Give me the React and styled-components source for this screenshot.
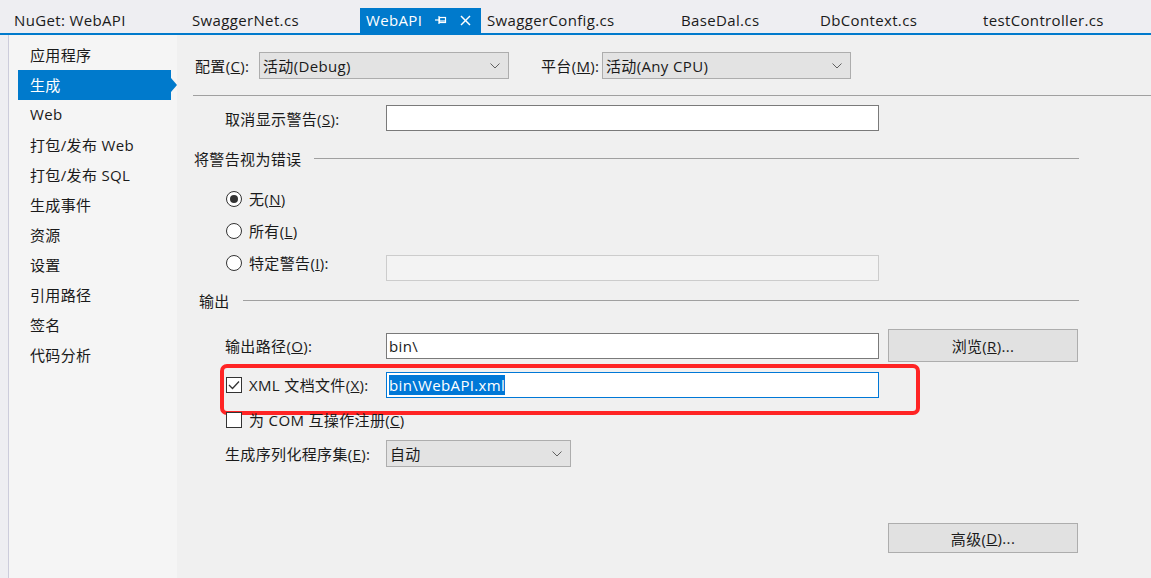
import React from 'react';
import styled, { createGlobalStyle } from 'styled-components';

const GlobalStyle = createGlobalStyle`
  html, body {
    margin: 0;
    padding: 0;
  }
  body {
    background: #eeeef2;
    font-family: "Open Sans", "Noto Sans CJK SC", sans-serif;
    font-size: 15px;
    letter-spacing: 0.35px;
    color: #1a1a1a;
  }
`;

const tabs = [
  { name: 'NuGet: WebAPI', width: 178 },
  { name: 'SwaggerNet.cs', width: 174 },
  { name: 'WebAPI', width: 121, active: true },
  { name: 'SwaggerConfig.cs', width: 194 },
  { name: 'BaseDal.cs', width: 139 },
  { name: 'DbContext.cs', width: 163 },
  { name: 'testController.cs', width: 174 },
];

const pages = ['应用程序', '生成', 'Web', '打包/发布 Web', '打包/发布 SQL', '生成事件', '资源', '设置', '引用路径', '签名', '代码分析'];

const Chevron = () => (
  <svg width="10" height="6" viewBox="0 0 10 6">
    <polyline points="0.5,0.5 5,5 9.5,0.5" fill="none" stroke="#606060" strokeWidth="1" />
  </svg>
);

const PinIcon = () => (
  <svg width="12" height="10" viewBox="0 0 12 10">
    <line x1="0" y1="5" x2="4" y2="5" stroke="#fff" strokeWidth="1.2" />
    <line x1="4" y1="1" x2="4" y2="9" stroke="#fff" strokeWidth="1.2" />
    <rect x="4.5" y="2.5" width="6" height="5" fill="none" stroke="#fff" strokeWidth="1.2" />
    <line x1="4.5" y1="6" x2="10.5" y2="6" stroke="#fff" strokeWidth="1.2" />
  </svg>
);

const CloseIcon = () => (
  <svg width="11" height="11" viewBox="0 0 11 11">
    <line x1="1" y1="1" x2="10" y2="10" stroke="#fff" strokeWidth="1.5" />
    <line x1="10" y1="1" x2="1" y2="10" stroke="#fff" strokeWidth="1.5" />
  </svg>
);

const CheckMark = () => (
  <svg width="12" height="10" viewBox="0 0 12 10">
    <polyline points="1,5 4.5,8.5 11,1.5" fill="none" stroke="#333" strokeWidth="1.3" />
  </svg>
);

export default function App() {
  return (
    <Window>
      <GlobalStyle />
      <TabBar>
        {tabs.map(tab => (
          <Tab key={tab.name} $w={tab.width} $active={tab.active}>
            <span>{tab.name}</span>
            {tab.active && (
              <TabIcons>
                <PinIcon />
                <CloseIcon />
              </TabIcons>
            )}
          </Tab>
        ))}
      </TabBar>
      <Body>
        <LeftStrip />
        <Sidebar>
          {pages.map(page => (
            <NavItem key={page} $selected={page === '生成'}>{page}</NavItem>
          ))}
        </Sidebar>
        <Main>
          <ConfigRow>
            <ConfigLabel $w={64}>配置(<u>C</u>):</ConfigLabel>
            <Select $w={250}>
              <span>活动(Debug)</span>
              <Chevron />
            </Select>
            <ConfigLabel $w={61} $gap={32}>平台(<u>M</u>):</ConfigLabel>
            <Select $w={249}>
              <span>活动(Any CPU)</span>
              <Chevron />
            </Select>
          </ConfigRow>
          <Divider />

          <Form>
            <Row $h={26} $mt={9}>
              <FieldLabel>取消显示警告(<u>S</u>):</FieldLabel>
              <TextBox />
            </Row>

            <GroupHeader $mt={19} $indent={1}>
              <span>将警告视为错误</span>
              <GroupLine />
            </GroupHeader>

            <RadioRow $mt={13}>
              <Radio $checked />
              <OptionLabel>无(<u>N</u>)</OptionLabel>
            </RadioRow>
            <RadioRow>
              <Radio />
              <OptionLabel>所有(<u>L</u>)</OptionLabel>
            </RadioRow>
            <RadioRow>
              <Radio />
              <OptionLabel $w={137}>特定警告(<u>I</u>):</OptionLabel>
              <TextBox $disabled $top={8} />
            </RadioRow>

            <GroupHeader $mt={13} $indent={6}>
              <span>输出</span>
              <GroupLine />
            </GroupHeader>

            <Row $h={33} $mt={17}>
              <FieldLabel>输出路径(<u>O</u>):</FieldLabel>
              <TextBox>bin\</TextBox>
              <Button $ml={9} $h={33}>浏览(<u>R</u>)...</Button>
            </Row>

            <Row $h={26} $mt={10}>
              <CheckBox><CheckMark /></CheckBox>
              <OptionLabel $w={137}>XML 文档文件(<u>X</u>):</OptionLabel>
              <TextBox $focused>
                <Selection>bin\WebAPI.xml</Selection>
              </TextBox>
              <Highlight />
            </Row>

            <Row $h={16} $mt={14}>
              <CheckBox />
              <OptionLabel>为 COM 互操作注册(<u>C</u>)</OptionLabel>
            </Row>

            <Row $h={27} $mt={12}>
              <FieldLabel>生成序列化程序集(<u>E</u>):</FieldLabel>
              <Select $w={185}>
                <span>自动</span>
                <Chevron />
              </Select>
            </Row>

            <Row $h={30} $mt={56}>
              <Button $ml={695} $h={30}>高级(<u>D</u>)...</Button>
            </Row>
          </Form>
        </Main>
      </Body>
    </Window>
  );
}

const Window = styled.div`
  width: 1151px;
  height: 578px;
  display: flex;
  flex-direction: column;
  overflow: hidden;
`;

const TabBar = styled.div`
  height: 33px;
  display: flex;
  align-items: flex-end;
  padding-left: 8px;
  background: #eeeef2;
  border-bottom: 2px solid #007acc;
`;

const Tab = styled.div`
  width: ${p => p.$w}px;
  height: 25px;
  flex-shrink: 0;
  box-sizing: border-box;
  padding: 0 0 1px 6px;
  display: flex;
  align-items: center;
  white-space: nowrap;
  background: ${p => (p.$active ? '#007acc' : 'transparent')};
  color: ${p => (p.$active ? '#fff' : '#1a1a1a')};
`;

const TabIcons = styled.span`
  display: flex;
  align-items: center;
  gap: 13px;
  margin-left: 13px;
`;

const Body = styled.div`
  flex: 1;
  display: flex;
`;

const LeftStrip = styled.div`
  width: 8px;
  background: #eeeef2;
  border-right: 1px solid #ccccdb;
`;

const Sidebar = styled.div`
  width: 168px;
  padding-top: 5px;
  background: #f5f5f5;
`;

const NavItem = styled.div`
  position: relative;
  height: 30px;
  width: 153px;
  margin-left: 9px;
  padding: 0 0 2px 12px;
  box-sizing: border-box;
  display: flex;
  align-items: center;
  background: ${p => (p.$selected ? '#007acc' : 'transparent')};
  color: ${p => (p.$selected ? '#fff' : '#1a1a1a')};

  &::after {
    content: '';
    display: ${p => (p.$selected ? 'block' : 'none')};
    position: absolute;
    left: 100%;
    top: 50%;
    margin-top: -7px;
    border-left: 6px solid #007acc;
    border-top: 7px solid transparent;
    border-bottom: 7px solid transparent;
  }
`;

const Main = styled.div`
  flex: 1;
  background: #f0f0f0;
  padding-top: 17px;
  padding-left: 16px;
  display: flex;
  flex-direction: column;
`;

const ConfigRow = styled.div`
  height: 27px;
  padding-left: 2px;
  display: flex;
  align-items: center;
`;

const ConfigLabel = styled.span`
  width: ${p => p.$w}px;
  margin-left: ${p => p.$gap || 0}px;
  flex-shrink: 0;
  white-space: nowrap;
`;

const Select = styled.div`
  width: ${p => p.$w}px;
  height: 27px;
  flex-shrink: 0;
  box-sizing: border-box;
  padding: 0 8px 0 3px;
  display: flex;
  align-items: center;
  justify-content: space-between;
  background: #e3e3e3;
  border: 1px solid #adadad;
`;

const Divider = styled.div`
  height: 1px;
  margin-top: 16px;
  background: #a0a0a0;
`;

const Form = styled.div`
  width: 886px;
  display: flex;
  flex-direction: column;
`;

const Row = styled.div`
  position: relative;
  height: ${p => p.$h}px;
  margin-top: ${p => p.$mt || 0}px;
  display: flex;
  align-items: center;
`;

const FieldLabel = styled.span`
  width: 161px;
  margin-left: 32px;
  flex-shrink: 0;
  white-space: nowrap;
`;

const TextBox = styled.div`
  width: 493px;
  height: 26px;
  flex-shrink: 0;
  box-sizing: border-box;
  padding-left: 2px;
  display: flex;
  align-items: center;
  align-self: ${p => (p.$top ? 'flex-start' : 'center')};
  margin-top: ${p => p.$top || 0}px;
  background: ${p => (p.$disabled ? '#f3f3f3' : '#fff')};
  border: 1px solid ${p => (p.$disabled ? '#cccccc' : p.$focused ? '#0078d7' : '#7a7a7a')};
`;

const Selection = styled.span`
  background: #0078d7;
  color: #fff;
  line-height: 20px;
`;

const Button = styled.div`
  width: 190px;
  height: ${p => p.$h}px;
  margin-left: ${p => p.$ml}px;
  flex-shrink: 0;
  box-sizing: border-box;
  display: flex;
  align-items: center;
  justify-content: center;
  background: #e1e1e1;
  border: 1px solid #adadad;
`;

const GroupHeader = styled.div`
  height: 20px;
  margin-top: ${p => p.$mt}px;
  padding-left: ${p => p.$indent}px;
  display: flex;
  align-items: center;
  white-space: nowrap;

  > span {
    padding-bottom: 3px;
  }
`;

const GroupLine = styled.div`
  flex: 1;
  height: 1px;
  margin-left: 13px;
  margin-bottom: 4px;
  background: #a0a0a0;
`;

const RadioRow = styled.div`
  height: 32px;
  margin-top: ${p => p.$mt || 0}px;
  display: flex;
  align-items: center;
`;

const Radio = styled.span`
  width: 16px;
  height: 16px;
  margin-left: 33px;
  flex-shrink: 0;
  box-sizing: border-box;
  border: 1px solid #333;
  border-radius: 50%;
  background: #fff;
  display: flex;
  align-items: center;
  justify-content: center;

  &::after {
    content: '';
    display: ${p => (p.$checked ? 'block' : 'none')};
    width: 8px;
    height: 8px;
    border-radius: 50%;
    background: #333;
  }
`;

const CheckBox = styled.span`
  width: 16px;
  height: 16px;
  margin-left: 33px;
  flex-shrink: 0;
  box-sizing: border-box;
  border: 1px solid #333;
  background: #fff;
  display: flex;
  align-items: center;
  justify-content: center;
`;

const OptionLabel = styled.span`
  margin-left: 7px;
  padding-bottom: 2px;
  white-space: nowrap;
  ${p => p.$w && `width: ${p.$w}px; flex-shrink: 0;`}
`;

const Highlight = styled.div`
  position: absolute;
  left: 27px;
  top: -8px;
  width: 700px;
  height: 51px;
  box-sizing: border-box;
  border: 4px solid #ff2424;
  border-radius: 7px;
  pointer-events: none;
`;
